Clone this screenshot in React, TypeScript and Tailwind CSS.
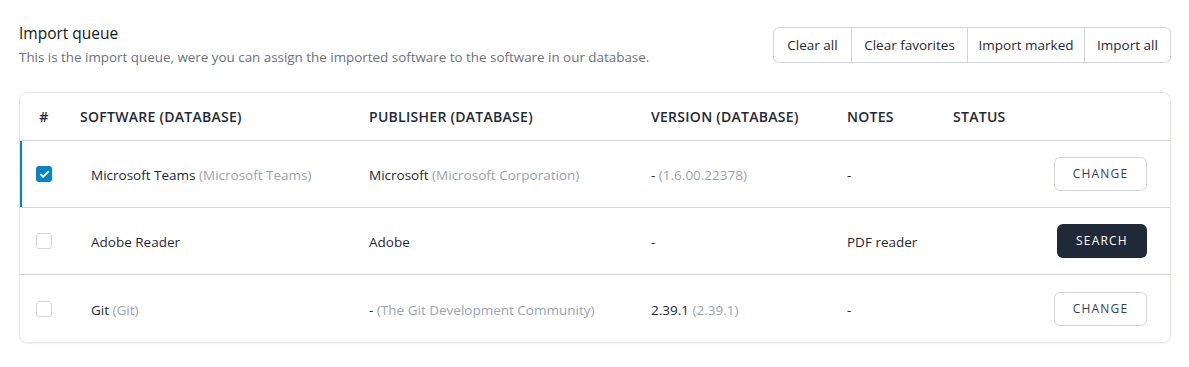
import { Check } from 'lucide-react';

type Row = {
    checked: boolean;
    name: string;
    nameDb?: string;
    publisher: string;
    publisherDb?: string;
    version: string;
    versionDb?: string;
    notes: string;
    action: 'change' | 'search';
};

const rows: Row[] = [
    { checked: true, name: 'Microsoft Teams', nameDb: 'Microsoft Teams', publisher: 'Microsoft', publisherDb: 'Microsoft Corporation', version: '-', versionDb: '1.6.00.22378', notes: '-', action: 'change' },
    { checked: false, name: 'Adobe Reader', publisher: 'Adobe', version: '-', notes: 'PDF reader', action: 'search' },
    { checked: false, name: 'Git', nameDb: 'Git', publisher: '-', publisherDb: 'The Git Development Community', version: '2.39.1', versionDb: '2.39.1', notes: '-', action: 'change' },
];

const cols = 'grid grid-cols-[48px_289px_282px_196px_106px_1fr] items-center';

function Value({ main, db }: { main: string; db?: string }) {
    return (
        <span className="text-[13.5px] text-[#1f2937]">
            {main}
            {db && <span className="text-[#9ca3af]"> ({db})</span>}
        </span>
    );
}

export default function App() {
    return (
        <div className="min-h-[367px] bg-white pl-[19px] pr-[18px] pt-[22px] font-['Open_Sans',sans-serif] antialiased">
            {/* Header */}
            <div className="flex items-start justify-between">
                <div>
                    <h1 className="mt-[1px] text-[15.5px] font-medium leading-[20px] text-[#111827]">Import queue</h1>
                    <p className="mt-[5px] text-[13.4px] leading-[18px] text-[#6b7280]">
                        This is the import queue, were you can assign the imported software to the software in our database.
                    </p>
                </div>
                <div className="mt-[5px] flex h-[36px] overflow-hidden rounded-md border border-[#d1d5db] text-[13.5px] text-[#1f2937]">
                    <button className="w-[77px]">Clear all</button>
                    <button className="w-[116px] border-l border-[#d1d5db]">Clear favorites</button>
                    <button className="w-[117px] border-l border-[#d1d5db]">Import marked</button>
                    <button className="w-[86px] border-l border-[#d1d5db]">Import all</button>
                </div>
            </div>

            {/* Table */}
            <div className="mt-[26px] overflow-hidden rounded-lg border border-[#e5e7eb] shadow-[0_1px_2px_rgba(0,0,0,0.06)]">
                <div className={`${cols} h-[48px] border-b border-[#d1d5db] text-[14px] font-semibold tracking-[0.02em] text-[#1f2937]`}>
                    <div className="text-center">#</div>
                    <div className="pl-[12px]">SOFTWARE (DATABASE)</div>
                    <div className="pl-[12px]">PUBLISHER (DATABASE)</div>
                    <div className="pl-[12px]">VERSION (DATABASE)</div>
                    <div className="pl-[12px]">NOTES</div>
                    <div className="pl-[12px]">STATUS</div>
                </div>
                {rows.map((r, i) => (
                    <div
                        key={r.name}
                        className={`${cols} h-[67px] ${i < rows.length - 1 ? 'border-b border-[#d1d5db]' : ''} ${r.checked ? 'shadow-[inset_2px_0_0_#0284c7]' : ''}`}
                    >
                        <div className="flex justify-center">
                            {r.checked ? (
                                <span className="flex h-[16px] w-[16px] items-center justify-center rounded-[3px] bg-[#0284c7]">
                                    <Check className="h-[11px] w-[11px] text-white" strokeWidth={4} />
                                </span>
                            ) : (
                                <span className="h-[16px] w-[16px] rounded-[3px] border border-[#d1d5db] bg-white" />
                            )}
                        </div>
                        <div className="pl-[23px]"><Value main={r.name} db={r.nameDb} /></div>
                        <div className="pl-[12px]"><Value main={r.publisher} db={r.publisherDb} /></div>
                        <div className="pl-[12px]"><Value main={r.version} db={r.versionDb} /></div>
                        <div className="pl-[12px]"><Value main={r.notes} /></div>
                        <div className="flex justify-end pr-[23px]">
                            {r.action === 'search' ? (
                                <button className="h-[34px] w-[90px] rounded-md bg-[#1f2937] text-[12px] tracking-[0.1em] text-white">SEARCH</button>
                            ) : (
                                <button className="h-[34px] w-[93px] rounded-md border border-[#d1d5db] bg-white text-[12px] tracking-[0.1em] text-[#374151]">CHANGE</button>
                            )}
                        </div>
                    </div>
                ))}
            </div>
        </div>
    );
}
